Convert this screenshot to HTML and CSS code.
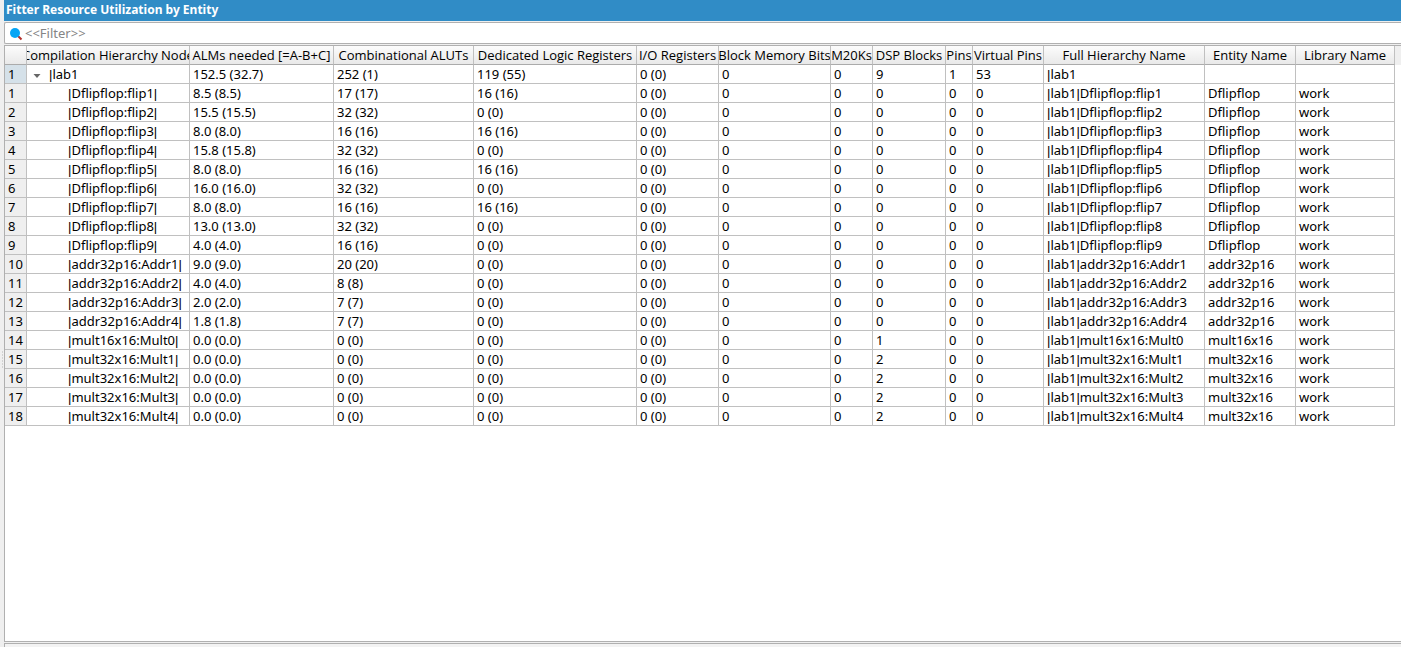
FILE: index.html
```html
<!DOCTYPE html>
<html lang="en">
<head>
<meta charset="utf-8">
<title>Fitter Resource Utilization by Entity</title>
<link rel="stylesheet" href="styles.css">
</head>
<body>
<div class="window">
<div class="splitter" aria-hidden="true"><svg width="4" height="20" viewBox="0 0 4 20"><path d="M2 1h1M2 4h1M2 7h1M2 10h1M2 13h1M2 16h1" stroke="#b5b5b5"/></svg></div>
<main class="report">
<h1 class="title">Fitter Resource Utilization by Entity</h1>
<label class="filter">
<svg class="filter-icon" width="14" height="14" viewBox="0 0 14 14" aria-hidden="true"><path d="M9 9l3.500 3.500" stroke="#b5302a" stroke-width="2"/><circle cx="6" cy="6" r="5" fill="#06a5f5"/></svg>
<input class="filter-input" type="text" placeholder="&lt;&lt;Filter&gt;&gt;" aria-label="Filter">
</label>
<div class="table-view">
<table class="grid">
<colgroup><col class="c-row"><col class="c-node"><col class="c-alm"><col class="c-alut"><col class="c-reg"><col class="c-io"><col class="c-mem"><col class="c-m20"><col class="c-dsp"><col class="c-pin"><col class="c-vpin"><col class="c-full"><col class="c-entity"><col class="c-lib"></colgroup>
<thead>
<tr><th></th><th><span class="head-text">Compilation Hierarchy Node</span></th><th><span class="head-text">ALMs needed [=A-B+C]</span></th><th><span class="head-text">Combinational ALUTs</span></th><th><span class="head-text">Dedicated Logic Registers</span></th><th><span class="head-text">I/O Registers</span></th><th><span class="head-text">Block Memory Bits</span></th><th><span class="head-text">M20Ks</span></th><th><span class="head-text">DSP Blocks</span></th><th><span class="head-text">Pins</span></th><th><span class="head-text">Virtual Pins</span></th><th><span class="head-text">Full Hierarchy Name</span></th><th><span class="head-text">Entity Name</span></th><th><span class="head-text">Library Name</span></th></tr>
</thead>
<tbody>
<tr class="root"><th scope="row">1</th><td><button class="toggle" type="button" aria-label="Collapse lab1"><svg width="8" height="4" viewBox="0 0 8 4"><path d="M0.500 0h7L4 4z" fill="#666"/></svg></button><span class="bar">|</span>lab1</td><td>152.5 (32.7)</td><td>252 (1)</td><td>119 (55)</td><td>0 (0)</td><td>0</td><td>0</td><td>9</td><td>1</td><td>53</td><td><span class="bar">|</span>lab1</td><td></td><td></td></tr>
<tr><th scope="row">1</th><td><span class="bar">|</span>Dflipflop:flip1<span class="bar">|</span></td><td>8.5 (8.5)</td><td>17 (17)</td><td>16 (16)</td><td>0 (0)</td><td>0</td><td>0</td><td>0</td><td>0</td><td>0</td><td><span class="bar">|</span>lab1<span class="bar">|</span>Dflipflop:flip1</td><td>Dflipflop</td><td>work</td></tr>
<tr><th scope="row">2</th><td><span class="bar">|</span>Dflipflop:flip2<span class="bar">|</span></td><td>15.5 (15.5)</td><td>32 (32)</td><td>0 (0)</td><td>0 (0)</td><td>0</td><td>0</td><td>0</td><td>0</td><td>0</td><td><span class="bar">|</span>lab1<span class="bar">|</span>Dflipflop:flip2</td><td>Dflipflop</td><td>work</td></tr>
<tr><th scope="row">3</th><td><span class="bar">|</span>Dflipflop:flip3<span class="bar">|</span></td><td>8.0 (8.0)</td><td>16 (16)</td><td>16 (16)</td><td>0 (0)</td><td>0</td><td>0</td><td>0</td><td>0</td><td>0</td><td><span class="bar">|</span>lab1<span class="bar">|</span>Dflipflop:flip3</td><td>Dflipflop</td><td>work</td></tr>
<tr><th scope="row">4</th><td><span class="bar">|</span>Dflipflop:flip4<span class="bar">|</span></td><td>15.8 (15.8)</td><td>32 (32)</td><td>0 (0)</td><td>0 (0)</td><td>0</td><td>0</td><td>0</td><td>0</td><td>0</td><td><span class="bar">|</span>lab1<span class="bar">|</span>Dflipflop:flip4</td><td>Dflipflop</td><td>work</td></tr>
<tr><th scope="row">5</th><td><span class="bar">|</span>Dflipflop:flip5<span class="bar">|</span></td><td>8.0 (8.0)</td><td>16 (16)</td><td>16 (16)</td><td>0 (0)</td><td>0</td><td>0</td><td>0</td><td>0</td><td>0</td><td><span class="bar">|</span>lab1<span class="bar">|</span>Dflipflop:flip5</td><td>Dflipflop</td><td>work</td></tr>
<tr><th scope="row">6</th><td><span class="bar">|</span>Dflipflop:flip6<span class="bar">|</span></td><td>16.0 (16.0)</td><td>32 (32)</td><td>0 (0)</td><td>0 (0)</td><td>0</td><td>0</td><td>0</td><td>0</td><td>0</td><td><span class="bar">|</span>lab1<span class="bar">|</span>Dflipflop:flip6</td><td>Dflipflop</td><td>work</td></tr>
<tr><th scope="row">7</th><td><span class="bar">|</span>Dflipflop:flip7<span class="bar">|</span></td><td>8.0 (8.0)</td><td>16 (16)</td><td>16 (16)</td><td>0 (0)</td><td>0</td><td>0</td><td>0</td><td>0</td><td>0</td><td><span class="bar">|</span>lab1<span class="bar">|</span>Dflipflop:flip7</td><td>Dflipflop</td><td>work</td></tr>
<tr><th scope="row">8</th><td><span class="bar">|</span>Dflipflop:flip8<span class="bar">|</span></td><td>13.0 (13.0)</td><td>32 (32)</td><td>0 (0)</td><td>0 (0)</td><td>0</td><td>0</td><td>0</td><td>0</td><td>0</td><td><span class="bar">|</span>lab1<span class="bar">|</span>Dflipflop:flip8</td><td>Dflipflop</td><td>work</td></tr>
<tr><th scope="row">9</th><td><span class="bar">|</span>Dflipflop:flip9<span class="bar">|</span></td><td>4.0 (4.0)</td><td>16 (16)</td><td>0 (0)</td><td>0 (0)</td><td>0</td><td>0</td><td>0</td><td>0</td><td>0</td><td><span class="bar">|</span>lab1<span class="bar">|</span>Dflipflop:flip9</td><td>Dflipflop</td><td>work</td></tr>
<tr><th scope="row">10</th><td><span class="bar">|</span>addr32p16:Addr1<span class="bar">|</span></td><td>9.0 (9.0)</td><td>20 (20)</td><td>0 (0)</td><td>0 (0)</td><td>0</td><td>0</td><td>0</td><td>0</td><td>0</td><td><span class="bar">|</span>lab1<span class="bar">|</span>addr32p16:Addr1</td><td>addr32p16</td><td>work</td></tr>
<tr><th scope="row">11</th><td><span class="bar">|</span>addr32p16:Addr2<span class="bar">|</span></td><td>4.0 (4.0)</td><td>8 (8)</td><td>0 (0)</td><td>0 (0)</td><td>0</td><td>0</td><td>0</td><td>0</td><td>0</td><td><span class="bar">|</span>lab1<span class="bar">|</span>addr32p16:Addr2</td><td>addr32p16</td><td>work</td></tr>
<tr><th scope="row">12</th><td><span class="bar">|</span>addr32p16:Addr3<span class="bar">|</span></td><td>2.0 (2.0)</td><td>7 (7)</td><td>0 (0)</td><td>0 (0)</td><td>0</td><td>0</td><td>0</td><td>0</td><td>0</td><td><span class="bar">|</span>lab1<span class="bar">|</span>addr32p16:Addr3</td><td>addr32p16</td><td>work</td></tr>
<tr><th scope="row">13</th><td><span class="bar">|</span>addr32p16:Addr4<span class="bar">|</span></td><td>1.8 (1.8)</td><td>7 (7)</td><td>0 (0)</td><td>0 (0)</td><td>0</td><td>0</td><td>0</td><td>0</td><td>0</td><td><span class="bar">|</span>lab1<span class="bar">|</span>addr32p16:Addr4</td><td>addr32p16</td><td>work</td></tr>
<tr><th scope="row">14</th><td><span class="bar">|</span>mult16x16:Mult0<span class="bar">|</span></td><td>0.0 (0.0)</td><td>0 (0)</td><td>0 (0)</td><td>0 (0)</td><td>0</td><td>0</td><td>1</td><td>0</td><td>0</td><td><span class="bar">|</span>lab1<span class="bar">|</span>mult16x16:Mult0</td><td>mult16x16</td><td>work</td></tr>
<tr><th scope="row">15</th><td><span class="bar">|</span>mult32x16:Mult1<span class="bar">|</span></td><td>0.0 (0.0)</td><td>0 (0)</td><td>0 (0)</td><td>0 (0)</td><td>0</td><td>0</td><td>2</td><td>0</td><td>0</td><td><span class="bar">|</span>lab1<span class="bar">|</span>mult32x16:Mult1</td><td>mult32x16</td><td>work</td></tr>
<tr><th scope="row">16</th><td><span class="bar">|</span>mult32x16:Mult2<span class="bar">|</span></td><td>0.0 (0.0)</td><td>0 (0)</td><td>0 (0)</td><td>0 (0)</td><td>0</td><td>0</td><td>2</td><td>0</td><td>0</td><td><span class="bar">|</span>lab1<span class="bar">|</span>mult32x16:Mult2</td><td>mult32x16</td><td>work</td></tr>
<tr><th scope="row">17</th><td><span class="bar">|</span>mult32x16:Mult3<span class="bar">|</span></td><td>0.0 (0.0)</td><td>0 (0)</td><td>0 (0)</td><td>0 (0)</td><td>0</td><td>0</td><td>2</td><td>0</td><td>0</td><td><span class="bar">|</span>lab1<span class="bar">|</span>mult32x16:Mult3</td><td>mult32x16</td><td>work</td></tr>
<tr><th scope="row">18</th><td><span class="bar">|</span>mult32x16:Mult4<span class="bar">|</span></td><td>0.0 (0.0)</td><td>0 (0)</td><td>0 (0)</td><td>0 (0)</td><td>0</td><td>0</td><td>2</td><td>0</td><td>0</td><td><span class="bar">|</span>lab1<span class="bar">|</span>mult32x16:Mult4</td><td>mult32x16</td><td>work</td></tr>
</tbody>
</table>
</div>
<div class="next-panel"></div>
</main>
</div>
</body>
</html>
```
FILE: styles.css
```css
* { box-sizing: border-box; }

body {
  margin: 0;
  background: #efefef;
  color: #000;
  font: 13px/18px "Noto Sans", sans-serif;
}

.window {
  display: flex;
  height: 100vh;
  overflow: hidden;
}

.splitter {
  display: flex;
  flex: 0 0 4px;
  align-items: center;
  padding-top: 74px;
}

.report {
  display: flex;
  flex: 1;
  flex-direction: column;
  min-width: 0;
}

.title {
  margin: 0 0 1px;
  padding: 0 2px 1px;
  background: #308cc6;
  color: #fff;
  font-size: 12px;
  font-weight: 700;
  line-height: 20px;
}

.filter {
  display: flex;
  align-items: center;
  gap: 2px;
  height: 22px;
  margin-bottom: 1px;
  padding-left: 4px;
  background: #fff;
  border: 1px solid #b0b0b0;
  border-right: 0;
  border-radius: 2px 0 0 2px;
}

.filter-icon { margin-top: 2px; }

.filter-input {
  flex: 1;
  min-width: 0;
  padding: 0;
  border: 0;
  outline: 0;
  background: transparent;
  color: #000;
  font: inherit;
}

.filter-input::placeholder { color: #858585; opacity: 1; }

.table-view {
  flex: 1;
  min-height: 0;
  overflow: hidden;
  background: linear-gradient(#efefef, #efefef) 0 0 / 100% 19px no-repeat #fff;
  border: solid #b0b0b0;
  border-width: 1px 0 1px 1px;
}

.grid {
  width: 1390px;
  table-layout: fixed;
  border-collapse: separate;
  border-spacing: 0;
}

.c-row { width: 22px; }
.c-node { width: 163px; }
.c-alm { width: 144px; }
.c-alut { width: 140px; }
.c-reg { width: 163px; }
.c-io { width: 82px; }
.c-mem { width: 112px; }
.c-m20 { width: 42px; }
.c-dsp { width: 73px; }
.c-pin { width: 27px; }
.c-vpin { width: 71px; }
.c-full { width: 161px; }
.c-entity { width: 91px; }
.c-lib { width: 99px; }

.grid th,
.grid td {
  height: 19px;
  padding: 0 0 0 3px;
  overflow: hidden;
  border: solid #c0c0c0;
  border-width: 0 1px 1px 0;
  font-weight: 400;
  text-align: left;
  white-space: nowrap;
}

.grid thead th {
  padding: 0;
  background: linear-gradient(#fcfcfc, #e9e9e9);
  border-bottom-color: #ababab;
  font-family: "Open Sans", "Noto Sans", sans-serif;
}

.head-text {
  display: flex;
  justify-content: center;
  overflow: hidden;
}

.grid tbody th { background: #efefef; }

.grid tbody td:nth-child(2) { padding-left: 41px; }

.grid .root th { background: #d5e1e9; }

.grid tbody .root td:nth-child(2) { padding-left: 6px; }

.bar {
  font-family: "Liberation Sans", Arial, sans-serif;
  line-height: 1;
}

.toggle {
  display: inline-flex;
  width: 16px;
  height: 12px;
  align-items: center;
  margin: 0;
  padding: 0;
  border: 0;
  background: none;
  vertical-align: middle;
}

.next-panel {
  height: 4px;
  margin-top: 1px;
  background: #f3f3f3;
  border: solid #b0b0b0;
  border-width: 1px 0 0 1px;
}
```
